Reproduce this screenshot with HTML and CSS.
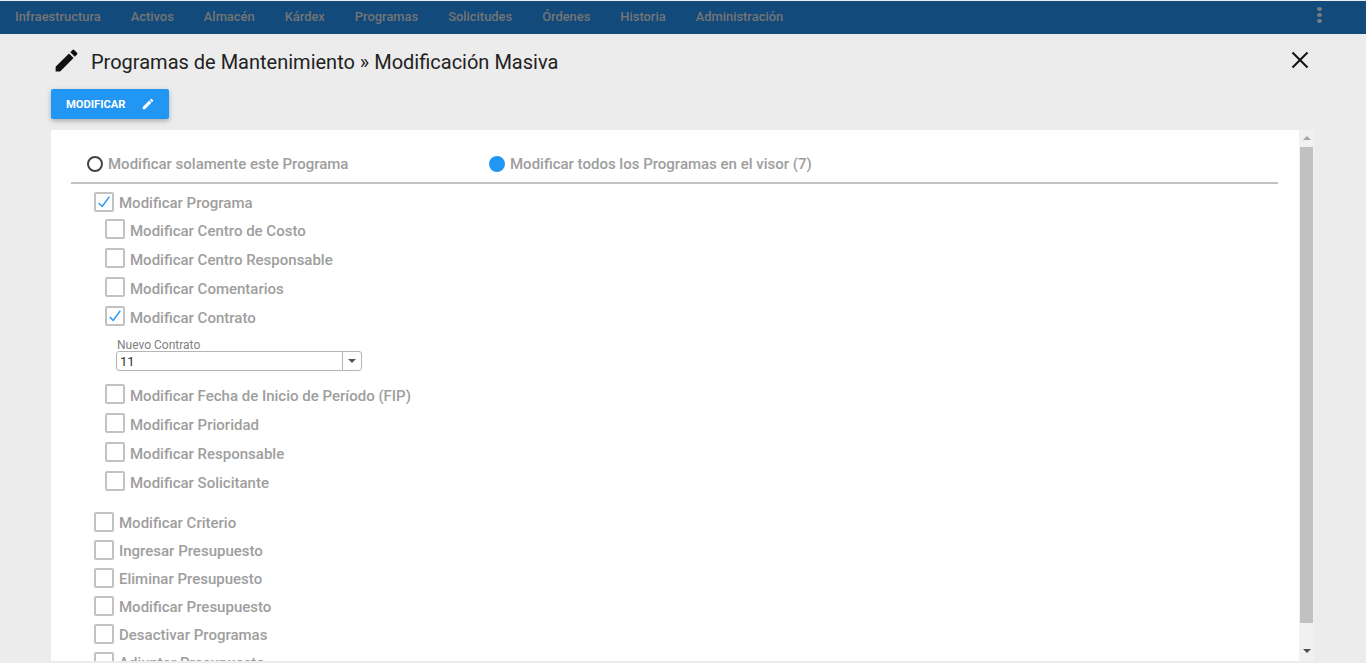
FILE: index.html
```html
<!DOCTYPE html>
<html lang="es">
<head>
<meta charset="utf-8">
<title>Modificación Masiva</title>
<link rel="stylesheet" href="styles.css">
</head>
<body>
<nav class="nav">
  <a>Infraestructura</a><a>Activos</a><a>Almacén</a><a>Kárdex</a><a>Programas</a><a>Solicitudes</a><a>Órdenes</a><a>Historia</a><a>Administración</a>
  <span class="dots"><i></i><i></i><i></i></span>
</nav>
<main class="page">
  <header class="title-row">
    <svg class="title-icon" viewBox="0 0 24 24"><path d="M3 17.25V21h3.750L17.810 9.940l-3.750-3.750L3 17.250zM20.710 7.040a1 1 0 0 0 0-1.410l-2.340-2.340a1 1 0 0 0-1.410 0l-1.830 1.830 3.750 3.750 1.830-1.830z"/></svg>
    <h1>Programas de Mantenimiento » Modificación Masiva</h1>
    <svg class="close" viewBox="0 0 18 18"><path d="M1.500 1.500l15 15M16.500 1.500l-15 15"/></svg>
  </header>
  <button class="btn">MODIFICAR
    <svg viewBox="0 0 24 24"><path d="M3 17.25V21h3.750L17.810 9.940l-3.750-3.750L3 17.250zM20.710 7.040a1 1 0 0 0 0-1.410l-2.340-2.340a1 1 0 0 0-1.410 0l-1.830 1.830 3.750 3.750 1.830-1.830z"/></svg>
  </button>
  <section class="panel">
    <div class="content">
      <div class="radios">
        <label class="radio radio-a"><span class="dot"></span>Modificar solamente este Programa</label>
        <label class="radio"><span class="dot on"></span>Modificar todos los Programas en el visor (7)</label>
      </div>
      <div class="group">
        <label class="chk top"><span class="box on"><svg viewBox="0 0 18 18"><path d="M3 10l4 4L15 3"/></svg></span>Modificar Programa</label>
        <div class="sub">
          <label class="chk"><span class="box"></span>Modificar Centro de Costo</label>
          <label class="chk"><span class="box"></span>Modificar Centro Responsable</label>
          <label class="chk"><span class="box"></span>Modificar Comentarios</label>
          <label class="chk"><span class="box on"><svg viewBox="0 0 18 18"><path d="M3 10l4 4L15 3"/></svg></span>Modificar Contrato</label>
          <div class="field">
            <div class="field-label">Nuevo Contrato</div>
            <div class="select"><span class="value">11</span><span class="arrow"></span></div>
          </div>
          <label class="chk"><span class="box"></span>Modificar Fecha de Inicio de Período (FIP)</label>
          <label class="chk"><span class="box"></span>Modificar Prioridad</label>
          <label class="chk"><span class="box"></span>Modificar Responsable</label>
          <label class="chk"><span class="box"></span>Modificar Solicitante</label>
        </div>
        <div class="main-list">
          <label class="chk top"><span class="box"></span>Modificar Criterio</label>
          <label class="chk top"><span class="box"></span>Ingresar Presupuesto</label>
          <label class="chk top"><span class="box"></span>Eliminar Presupuesto</label>
          <label class="chk top"><span class="box"></span>Modificar Presupuesto</label>
          <label class="chk top"><span class="box"></span>Desactivar Programas</label>
          <label class="chk top"><span class="box"></span>Adjuntar Presupuesto</label>
        </div>
      </div>
    </div>
    <div class="scrollbar">
      <span class="up"></span>
      <span class="thumb"></span>
      <span class="down"></span>
    </div>
  </section>
</main>
</body>
</html>
```
FILE: styles.css
```css
* { box-sizing: border-box; }
html, body { margin: 0; height: 663px; overflow: hidden; }
body { background: #ececec; font-family: Roboto, "Liberation Sans", sans-serif; color: #9e9e9e; }
.nav { height: 33px; margin-top: 1px; background: #124a7b; display: flex; align-items: center; padding: 0 0 2px 15px; gap: 30px; font-size: 12.9px; font-weight: 500; color: #757575; }
.dots { margin-left: auto; margin-right: 44px; display: flex; flex-direction: column; gap: 2px; margin-top: -4px; }
.dots i { width: 5px; height: 4px; border-radius: 50%; background: #7b7f83; }
.page { padding: 0 52px 0 51px; }
.title-row { display: flex; align-items: center; height: 55px; padding: 0 0 0 1px; }
.title-icon { width: 29px; height: 29px; margin: -2px 10px 0 0; fill: #111; }
h1 { margin: 0; font-size: 20px; font-weight: 400; color: #222; flex: 1; }
.close { width: 18px; height: 18px; margin: -3px 5px 0 0; fill: none; stroke: #111; stroke-width: 2; }
.btn { display: flex; align-items: center; width: 118px; height: 30px; border: 0; border-radius: 2px; padding: 0 0 0 15px; background: #2196f3; color: #fff; font: 700 11.2px Roboto, sans-serif; box-shadow: 0 2px 5px rgba(0,0,0,.28); }
.btn svg { width: 14px; height: 14px; margin-left: 16px; fill: #fff; }
.panel { display: flex; height: 531px; margin-top: 11px; background: #fff; border-radius: 2px 2px 0 0; overflow: hidden; }
.content { flex: 1; min-width: 0; padding: 0 21px 0 20px; height: 531px; overflow: hidden; }
.radios { display: flex; height: 54px; align-items: center; border-bottom: 2px solid #c4c1c1; font-size: 15px; font-weight: 500; padding: 16px 0 0 16px; }
.radio { display: flex; align-items: center; gap: 5px; }
.radio-a { width: 402px; }
.dot { width: 16px; height: 16px; border-radius: 50%; border: 2px solid #444; }
.dot.on { background: #2196f3; border-color: #2196f3; }
.group { padding: 5px 0 0 23px; }
.chk { display: flex; align-items: center; height: 29px; font-size: 15px; font-weight: 500; gap: 5px; }
.chk.top { height: 28px; }
.box { width: 20px; height: 20px; flex: none; margin-top: -3px; border: 2px solid #c2c2c2; border-radius: 2px; background: #fff; }
.box svg { display: block; width: 16px; height: 16px; fill: none; stroke: #2196f3; stroke-width: 1.6; }
.sub { padding-left: 11px; margin-top: -1px; }
.field { height: 49px; padding: 7px 0 0 11px; }
.field-label { font-size: 12px; line-height: 12px; font-weight: 400; color: #808080; padding-left: 1px; }
.select { display: flex; width: 246px; height: 20px; border: 1px solid #b5b5b5; border-radius: 3px; }
.value { flex: 1; font-size: 13px; line-height: 19px; padding-left: 3px; color: #333; font-weight: 400; }
.arrow { width: 19px; border-left: 1px solid #b5b5b5; position: relative; }
.arrow::after { content: ""; position: absolute; left: 5px; top: 7px; border: 4px solid transparent; border-top-color: #555; border-bottom: 0; }
.main-list { margin-top: 12px; }
.scrollbar { width: 15px; flex: none; background: #f1f1f1; display: flex; flex-direction: column; align-items: center; }
.up { height: 17px; width: 100%; position: relative; }
.up::after { content: ""; position: absolute; left: 4px; top: 6px; border: 4px solid transparent; border-bottom-color: #a3a3a3; border-top: 0; }
.thumb { width: 13px; height: 476px; background: #c1c1c1; }
.down { flex: 1; width: 100%; position: relative; }
.down::after { content: ""; position: absolute; left: 4px; top: 26px; border: 4px solid transparent; border-top-color: #505050; border-bottom: 0; }
```
